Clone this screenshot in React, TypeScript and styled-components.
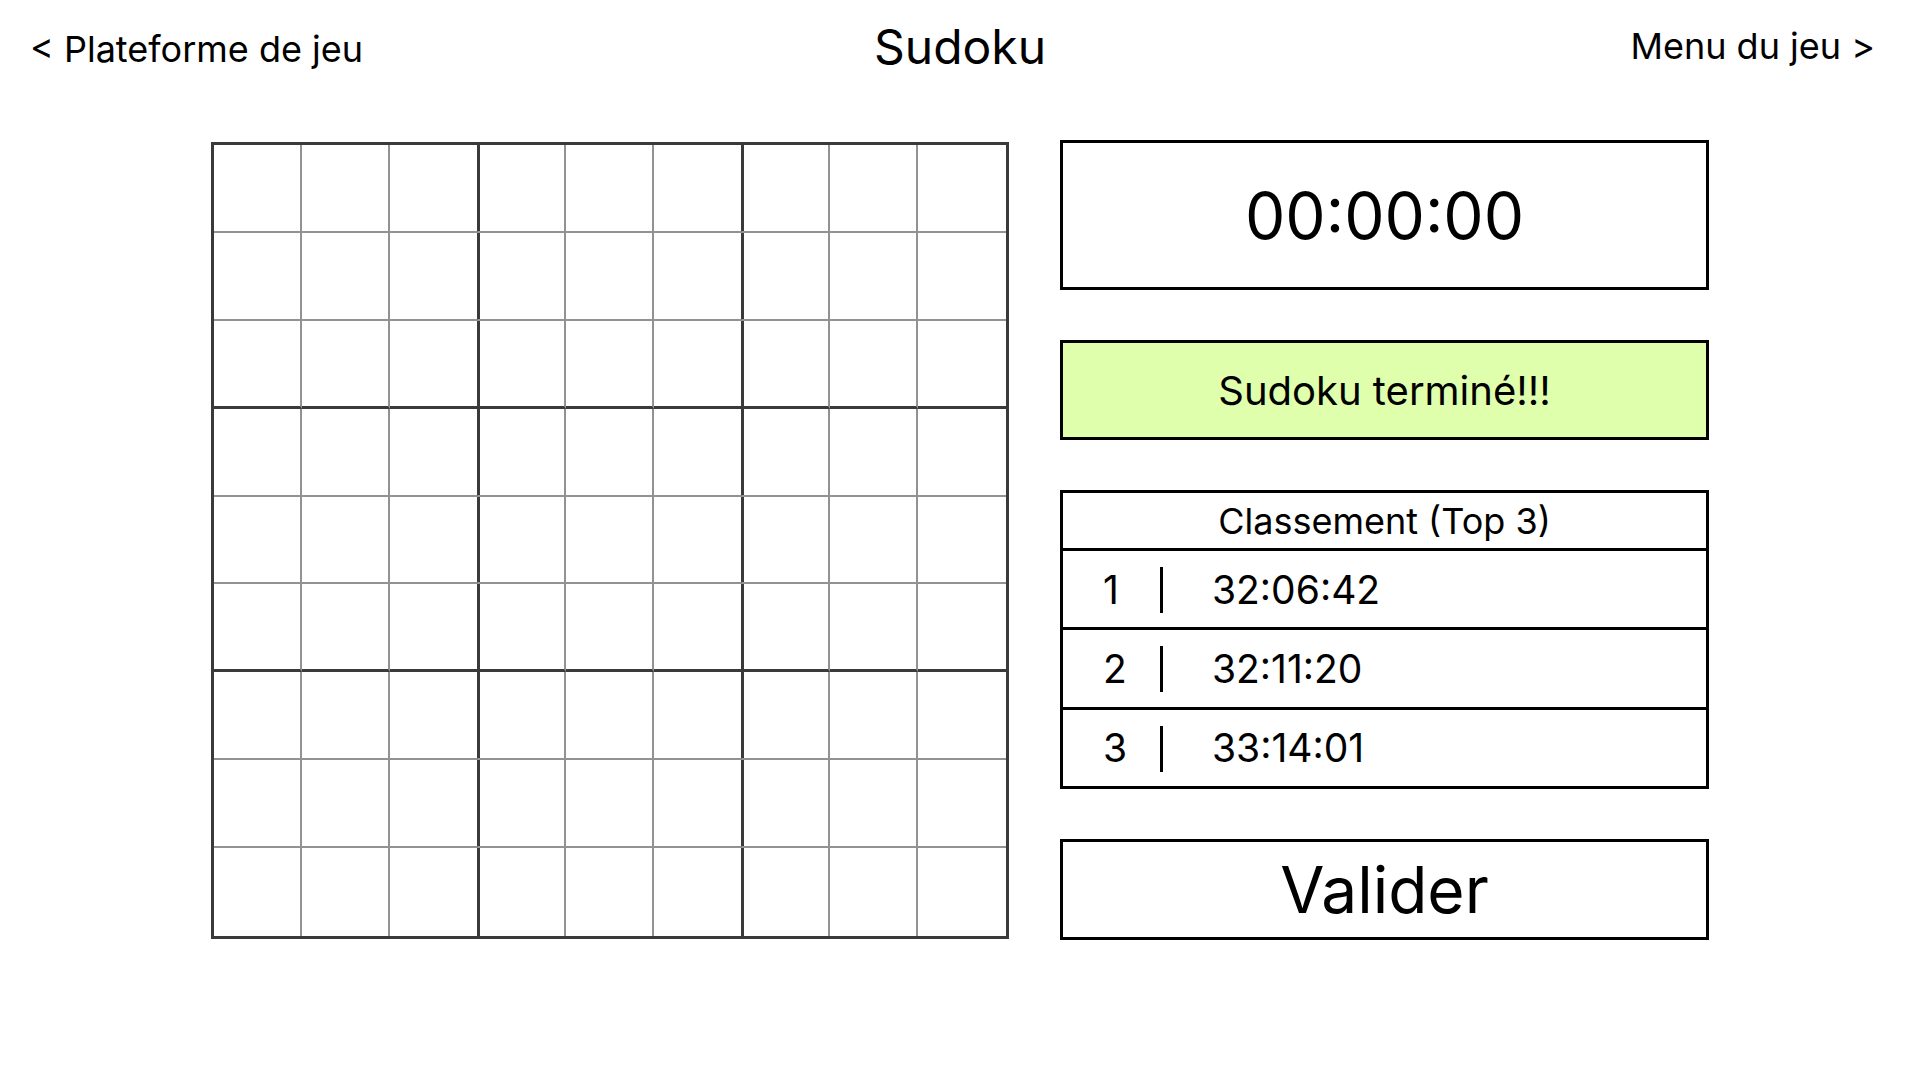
import React from 'react';
import styled, { createGlobalStyle } from 'styled-components';

const GlobalStyle = createGlobalStyle`
    html, body {
        margin: 0;
        padding: 0;
        background: #ffffff;
        font-family: Inter, "Noto Sans", sans-serif;
        color: #000;
    }
`;

const ranking = [
    { rank: 1, time: '32:06:42' },
    { rank: 2, time: '32:11:20' },
    { rank: 3, time: '33:14:01' }
];

export default function App() {
    const cells = Array.from({ length: 81 }, (_, i) => i);

    return (
        <Page>
            <GlobalStyle />
            <TopBar>
                <NavLink>&lt; Plateforme de jeu</NavLink>
                <Title>Sudoku</Title>
                <NavLink $right>Menu du jeu &gt;</NavLink>
            </TopBar>
            <Main>
                <Board>
                    {cells.map((i) => (
                        <Cell key={i} $col={i % 9} $row={Math.floor(i / 9)} />
                    ))}
                </Board>
                <Side>
                    <TimerBox>00:00:00</TimerBox>
                    <Status>Sudoku terminé!!!</Status>
                    <Ranking>
                        <RankingHead>Classement (Top 3)</RankingHead>
                        {ranking.map((r) => (
                            <RankRow key={r.rank}>
                                <RankNum>{r.rank}</RankNum>
                                <RankSep />
                                <RankTime>{r.time}</RankTime>
                            </RankRow>
                        ))}
                    </Ranking>
                    <ValidateButton>Valider</ValidateButton>
                </Side>
            </Main>
        </Page>
    );
}

const Page = styled.div`
    width: 1920px;
    height: 1080px;
    overflow: hidden;
`;

const TopBar = styled.header`
    display: grid;
    grid-template-columns: 1fr auto 1fr;
    align-items: center;
    height: 94px;
    padding: 0 30px;
    box-sizing: border-box;
`;

const NavLink = styled.div<{ $right?: boolean }>`
    font-size: 36px;
    justify-self: ${(p) => (p.$right ? 'end' : 'start')};
    margin-top: ${(p) => (p.$right ? '-3px' : '3px')};
    margin-right: ${(p) => (p.$right ? '15px' : '0')};
`;

const Title = styled.h1`
    margin: 0;
    font-size: 48px;
    font-weight: 400;
    margin-top: -2px;
`;

const Main = styled.main`
    display: flex;
    justify-content: center;
    gap: 51px;
    padding-top: 48px;
`;

const Board = styled.div`
    width: 798px;
    height: 797px;
    box-sizing: border-box;
    border: 3px solid #3a3a3a;
    display: grid;
    grid-template-columns: repeat(9, 1fr);
    grid-template-rows: repeat(9, 1fr);
`;

const Cell = styled.div<{ $col: number; $row: number }>`
    border-right: ${(p) =>
        p.$col === 8 ? 'none' : p.$col % 3 === 2 ? '3px solid #3a3a3a' : '2px solid #929292'};
    border-bottom: ${(p) =>
        p.$row === 8 ? 'none' : p.$row % 3 === 2 ? '3px solid #3a3a3a' : '2px solid #929292'};
    margin-right: ${(p) => (p.$col % 3 === 2 && p.$col < 8 ? '-2px' : '0')};
`;

const Side = styled.section`
    width: 649px;
    height: 800px;
    display: flex;
    flex-direction: column;
    justify-content: space-between;
    margin-top: -2px;
`;

const Framed = styled.div`
    box-sizing: border-box;
    border: 3px solid #000;
    display: flex;
    align-items: center;
    justify-content: center;
`;

const TimerBox = styled(Framed)`
    height: 150px;
    font-size: 64px;
`;

const Status = styled(Framed)`
    height: 100px;
    background: #dfffac;
    font-size: 40px;
`;

const Ranking = styled.div`
    box-sizing: border-box;
    border: 3px solid #000;
    height: 299px;
    display: flex;
    flex-direction: column;
`;

const RankingHead = styled.div`
    height: 55px;
    display: flex;
    align-items: center;
    justify-content: center;
    font-size: 36px;
    border-bottom: 3px solid #000;
`;

const RankRow = styled.div`
    flex: 1;
    display: flex;
    align-items: center;
    font-size: 39px;
    & + & {
        border-top: 3px solid #000;
    }
`;

const RankNum = styled.span`
    width: 45px;
    margin-left: 40px;
`;

const RankSep = styled.span`
    width: 3px;
    height: 46px;
    background: #000;
    margin-left: 12px;
    margin-top: 2px;
`;

const RankTime = styled.span`
    margin-left: 49px;
`;

const ValidateButton = styled(Framed)`
    height: 101px;
    font-size: 64px;
`;
